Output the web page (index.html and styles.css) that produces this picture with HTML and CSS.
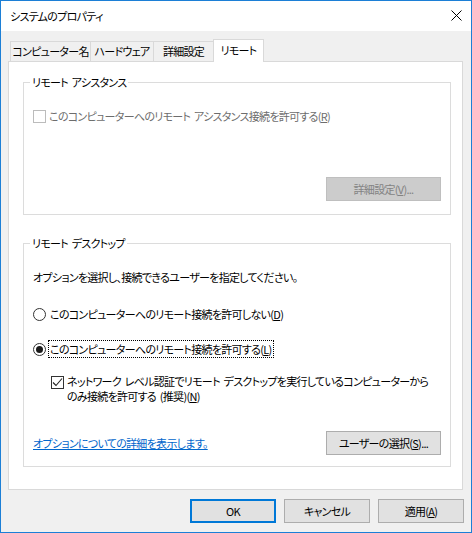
FILE: index.html
```html
<!DOCTYPE html>
<html>
<head>
  <meta name="viewport" content="width=device-width, initial-scale=1">
  <title>システムのプロパティ</title>
  <link rel="stylesheet" href="styles.css">
</head>
<body>
  <div class="window">
    <div class="titlebar">
      <span class="title">システムのプロパティ</span>
      <span class="close">
        <svg width="11" height="11" viewBox="0 0 11 11"><path d="M0.5 0.5 L10.5 10.5 M10.5 0.5 L0.5 10.5" stroke="#000" stroke-width="1" fill="none"/></svg>
      </span>
    </div>
    <div class="content">
      <div class="tabs">
        <div class="tab tab-1">コンピューター名</div>
        <div class="tab tab-2">ハードウェア</div>
        <div class="tab tab-3">詳細設定</div>
        <div class="tab tab-4 selected">リモート</div>
      </div>
      <div class="panel">
        <fieldset class="group group-assist">
          <legend>リモート アシスタンス</legend>
          <div class="row check-row disabled">
            <span class="checkbox"></span>
            <span>このコンピューターへのリモート アシスタンス接続を許可する(<u>R</u>)</span>
          </div>
          <div class="button-row">
            <button class="btn btn-wide" disabled>詳細設定(<u>V</u>)...</button>
          </div>
        </fieldset>
        <fieldset class="group group-desktop">
          <legend>リモート デスクトップ</legend>
          <div class="intro">オプションを選択し、接続できるユーザーを指定してください。</div>
          <div class="row radio-row radio-first">
            <span class="radio"></span>
            <span class="radio-label">このコンピューターへのリモート接続を許可しない(<u>D</u>)</span>
          </div>
          <div class="row radio-row radio-second">
            <span class="radio checked"></span>
            <span class="radio-label focused">このコンピューターへのリモート接続を許可する(<u>L</u>)</span>
          </div>
          <div class="nla">
            <span class="checkbox checked">
              <svg width="11" height="11" viewBox="0 0 11 11"><path d="M1 5.5 L4 8.5 L10 1.5" stroke="#222" stroke-width="1.1" fill="none"/></svg>
            </span>
            <span class="nla-text">ネットワーク レベル認証でリモート デスクトップを実行しているコンピューターから<br>のみ接続を許可する (推奨)(<u>N</u>)</span>
          </div>
          <div class="link-row">
            <a class="help-link" href="#">オプションについての詳細を表示します。</a>
            <button class="btn btn-wide">ユーザーの選択(<u>S</u>)...</button>
          </div>
        </fieldset>
      </div>
      <div class="dialog-buttons">
        <button class="btn btn-dialog default">OK</button>
        <button class="btn btn-dialog">キャンセル</button>
        <button class="btn btn-dialog">適用(<u>A</u>)</button>
      </div>
    </div>
  </div>
</body>
</html>
```

FILE: styles.css
```css
* {
  box-sizing: border-box;
}
body {
  margin: 0;
  font-family: "Noto Sans CJK JP", "Noto Sans", sans-serif;
  font-size: 11px;
  letter-spacing: -0.7px;
  word-spacing: 2px;
  font-feature-settings: "palt";
  color: #000;
  white-space: nowrap;
}
.window {
  width: 472px;
  height: 533px;
  border: 1px solid #1c7fd6;
  display: flex;
  flex-direction: column;
  background: #f0f0f0;
}
.titlebar {
  height: 30px;
  background: #fff;
  display: flex;
  align-items: center;
  justify-content: space-between;
  padding: 0 9px 0 9px;
}
.title {
  line-height: 16px;
}
.close {
  display: flex;
  margin-top: -1px;
}
.content {
  flex: 1;
  display: flex;
  flex-direction: column;
  padding: 8px 8px 9px 7px;
}
.tabs {
  display: flex;
  align-items: flex-end;
  padding-left: 2px;
  height: 22px;
}
.tab {
  height: 20px;
  border: 1px solid #d9d9d9;
  border-bottom: none;
  background: #f0f0f0;
  line-height: 18px;
  text-align: center;
  margin-left: -1px;
}
.tab-1 {
  margin-left: 0;
  width: 81px;
}
.tab-2 {
  width: 64px;
}
.tab-3 {
  width: 61px;
}
.tab-4 {
  width: 51px;
}
.tab.selected {
  height: 23px;
  margin-bottom: -1px;
  background: #fff;
  line-height: 20px;
  position: relative;
  z-index: 1;
}
.panel {
  flex: 1;
  background: #fff;
  border: 1px solid #d9d9d9;
  padding: 12px 11px 0 14px;
}
.group {
  margin: 0;
  padding: 0 9px 0 9px;
  border: 1px solid #dcdcdc;
}
.group legend {
  margin-left: -3px;
  padding: 0 2px;
  line-height: 16px;
}
.group-desktop {
  margin-top: 20px;
  padding-bottom: 11px;
}
.group-assist {
  padding-bottom: 13px;
}
.row {
  display: flex;
  align-items: center;
}
.check-row {
  margin-top: 18px;
  height: 16px;
  gap: 3px;
}
.disabled {
  color: #6d6d6d;
}
.checkbox {
  width: 13px;
  height: 13px;
  border: 1px solid #333;
  background: #fff;
  display: flex;
  align-items: center;
  justify-content: center;
  flex: none;
}
.disabled .checkbox {
  border-color: #bcbcbc;
}
.button-row {
  display: flex;
  justify-content: flex-end;
  margin-top: 53px;
}
.btn {
  font: inherit;
  letter-spacing: inherit;
  word-spacing: inherit;
  font-feature-settings: "palt";
  color: #000;
  height: 24px;
  background: #e1e1e1;
  border: 1px solid #adadad;
  padding: 0;
  line-height: 20px;
}
.btn:disabled {
  background: #cccccc;
  border-color: #bfbfbf;
  color: #838383;
}
.btn-wide {
  width: 115px;
}
.intro {
  margin-top: 18px;
  line-height: 16px;
}
.radio-row {
  height: 18px;
  gap: 2px;
}
.radio-first {
  margin-top: 20px;
}
.radio-second {
  margin-top: 17px;
}
.radio {
  width: 13px;
  height: 13px;
  border: 1px solid #333;
  border-radius: 50%;
  background: #fff;
  display: flex;
  align-items: center;
  justify-content: center;
  flex: none;
}
.radio.checked::after {
  content: "";
  width: 7px;
  height: 7px;
  border-radius: 50%;
  background: #1a1a1a;
}
.radio-label {
  border: 1px dotted transparent;
  line-height: 16px;
  padding: 0 1px;
}
.radio-label.focused {
  border-color: #000;
}
.nla {
  display: flex;
  margin-top: 16px;
  padding-left: 18px;
  gap: 3px;
}
.nla .checkbox {
  margin-top: 2px;
}
.nla-text {
  line-height: 15px;
}
.link-row {
  display: flex;
  justify-content: space-between;
  align-items: center;
  margin-top: 27px;
}
.help-link {
  color: #0066cc;
  text-decoration: underline;
}
.dialog-buttons {
  display: flex;
  justify-content: flex-end;
  gap: 8px;
  margin-top: 9px;
  margin-right: -1px;
}
.btn-dialog {
  width: 86px;
}
.btn.default {
  border: 2px solid #0078d7;
}
```
